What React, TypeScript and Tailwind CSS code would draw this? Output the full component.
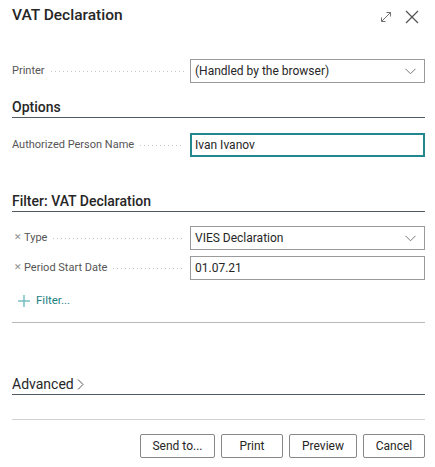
import { ReactNode } from "react";

const Dots = () => (
  <div className="flex-1 h-px mx-[6px] bg-[linear-gradient(to_right,#c8c8c8_1px,transparent_1px)] bg-[length:4px_1px] bg-repeat-x" />
);

const Chevron = () => (
  <svg width="11" height="7" viewBox="0 0 11 7" className="shrink-0">
    <polyline points="0.5,0.8 5.5,5.8 10.5,0.8" fill="none" stroke="#7a7a7a" strokeWidth="1" />
  </svg>
);

interface IRowProps {
  label: string;
  removable?: boolean;
  children: ReactNode;
}

const FieldRow = ({ label, removable, children }: IRowProps) => {
  return (
    <div className="flex items-center h-[24px]">
      <div className="w-[178px] flex items-center text-[11px] text-[#555]">
        {removable && <span className="text-[9px] text-[#8a8a8a] mx-[2px]">✕</span>}
        <span className="whitespace-nowrap">{label}</span>
        <Dots />
      </div>
      {children}
    </div>
  );
};

const Box = ({ value, dropdown, active }: { value: string; dropdown?: boolean; active?: boolean }) => (
  <div
    className={
      "flex-1 h-full flex items-center justify-between pr-[8px] text-[12px] text-[#262626] " +
      (active ? "border-2 border-[#23888e] pl-[3px]" : "border border-[#9a9a9a] pl-[4px]")
    }
  >
    <span className="whitespace-nowrap">{value}</span>
    {dropdown && <Chevron />}
  </div>
);

const SectionHead = ({ children }: { children: ReactNode }) => (
  <div className="h-[21px] border-b border-[#4f5a63] text-[14px] font-medium text-[#262626] leading-[20px] flex items-center">
    {children}
  </div>
);

const Btn = ({ children, w }: { children: ReactNode; w: string }) => (
  <button className={"h-[24px] border border-[#8a8886] rounded-[2px] bg-white text-[12px] text-[#262626] " + w}>{children}</button>
);

export default function App() {
  return (
    <div
      className="w-[435px] h-[467px] bg-white pl-3 pr-[10px] overflow-hidden"
      style={{ fontFamily: 'Roboto, "Open Sans", sans-serif' }}
    >
      <div className="h-[32px] flex items-center justify-between">
        <h1 className="text-[15.5px] font-medium text-[#262626]">VAT Declaration</h1>
        <div className="flex items-center gap-[13px] pr-[6px] pt-[2px]">
          <svg width="12" height="12" viewBox="0 0 12 12">
            <g fill="none" stroke="#707070" strokeWidth="1">
              <line x1="1.5" y1="10.5" x2="10.5" y2="1.5" />
              <polyline points="6.5,1.5 10.5,1.5 10.5,5.5" />
              <polyline points="1.5,6.5 1.5,10.5 5.5,10.5" />
            </g>
          </svg>
          <svg width="14" height="14" viewBox="0 0 14 14">
            <g stroke="#555" strokeWidth="1.2">
              <line x1="1" y1="1" x2="13" y2="13" />
              <line x1="13" y1="1" x2="1" y2="13" />
            </g>
          </svg>
        </div>
      </div>

      <div className="mt-[27px]">
        <FieldRow label="Printer">
          <Box value="(Handled by the browser)" dropdown />
        </FieldRow>
      </div>

      <div className="mt-[14px]">
        <SectionHead>Options</SectionHead>
      </div>

      <div className="mt-[15px]">
        <FieldRow label="Authorized Person Name">
          <Box value="Ivan Ivanov" active />
        </FieldRow>
      </div>

      <div className="mt-[34px]">
        <SectionHead>Filter: VAT Declaration</SectionHead>
      </div>

      <div className="mt-[14px] flex flex-col gap-[6px]">
        <FieldRow label="Type" removable>
          <Box value="VIES Declaration" dropdown />
        </FieldRow>
        <FieldRow label="Period Start Date" removable>
          <Box value="01.07.21" />
        </FieldRow>
      </div>

      <div className="mt-[11px] h-[20px] flex items-center gap-[6px] pl-[6px] text-[11.5px] text-[#1d7f84]">
        <svg width="12" height="12" viewBox="0 0 12 12">
          <g stroke="#5cb0b4" strokeWidth="1.2">
            <line x1="6" y1="0" x2="6" y2="12" />
            <line x1="0" y1="6" x2="12" y2="6" />
          </g>
        </svg>
        <span>Filter...</span>
      </div>

      <div className="mt-[11px] h-px bg-[#b8b8b8]" />

      <div className="mt-[51px] h-[21px] border-b border-[#4f5a63] flex items-center text-[14px] text-[#262626] leading-[20px]">
        <span>Advanced</span>
        <svg width="7" height="11" viewBox="0 0 7 11" className="ml-[3px]">
          <polyline points="1,0.5 6,5.5 1,10.5" fill="none" stroke="#555" strokeWidth="1" />
        </svg>
      </div>

      <div className="mt-[24px] h-px bg-[#d2d2d2]" />

      <div className="mt-[14px] flex justify-end gap-[6px]">
        <Btn w="w-[75px]">Send to...</Btn>
        <Btn w="w-[62px]">Print</Btn>
        <Btn w="w-[68px]">Preview</Btn>
        <Btn w="w-[62px]">Cancel</Btn>
      </div>
    </div>
  );
}
